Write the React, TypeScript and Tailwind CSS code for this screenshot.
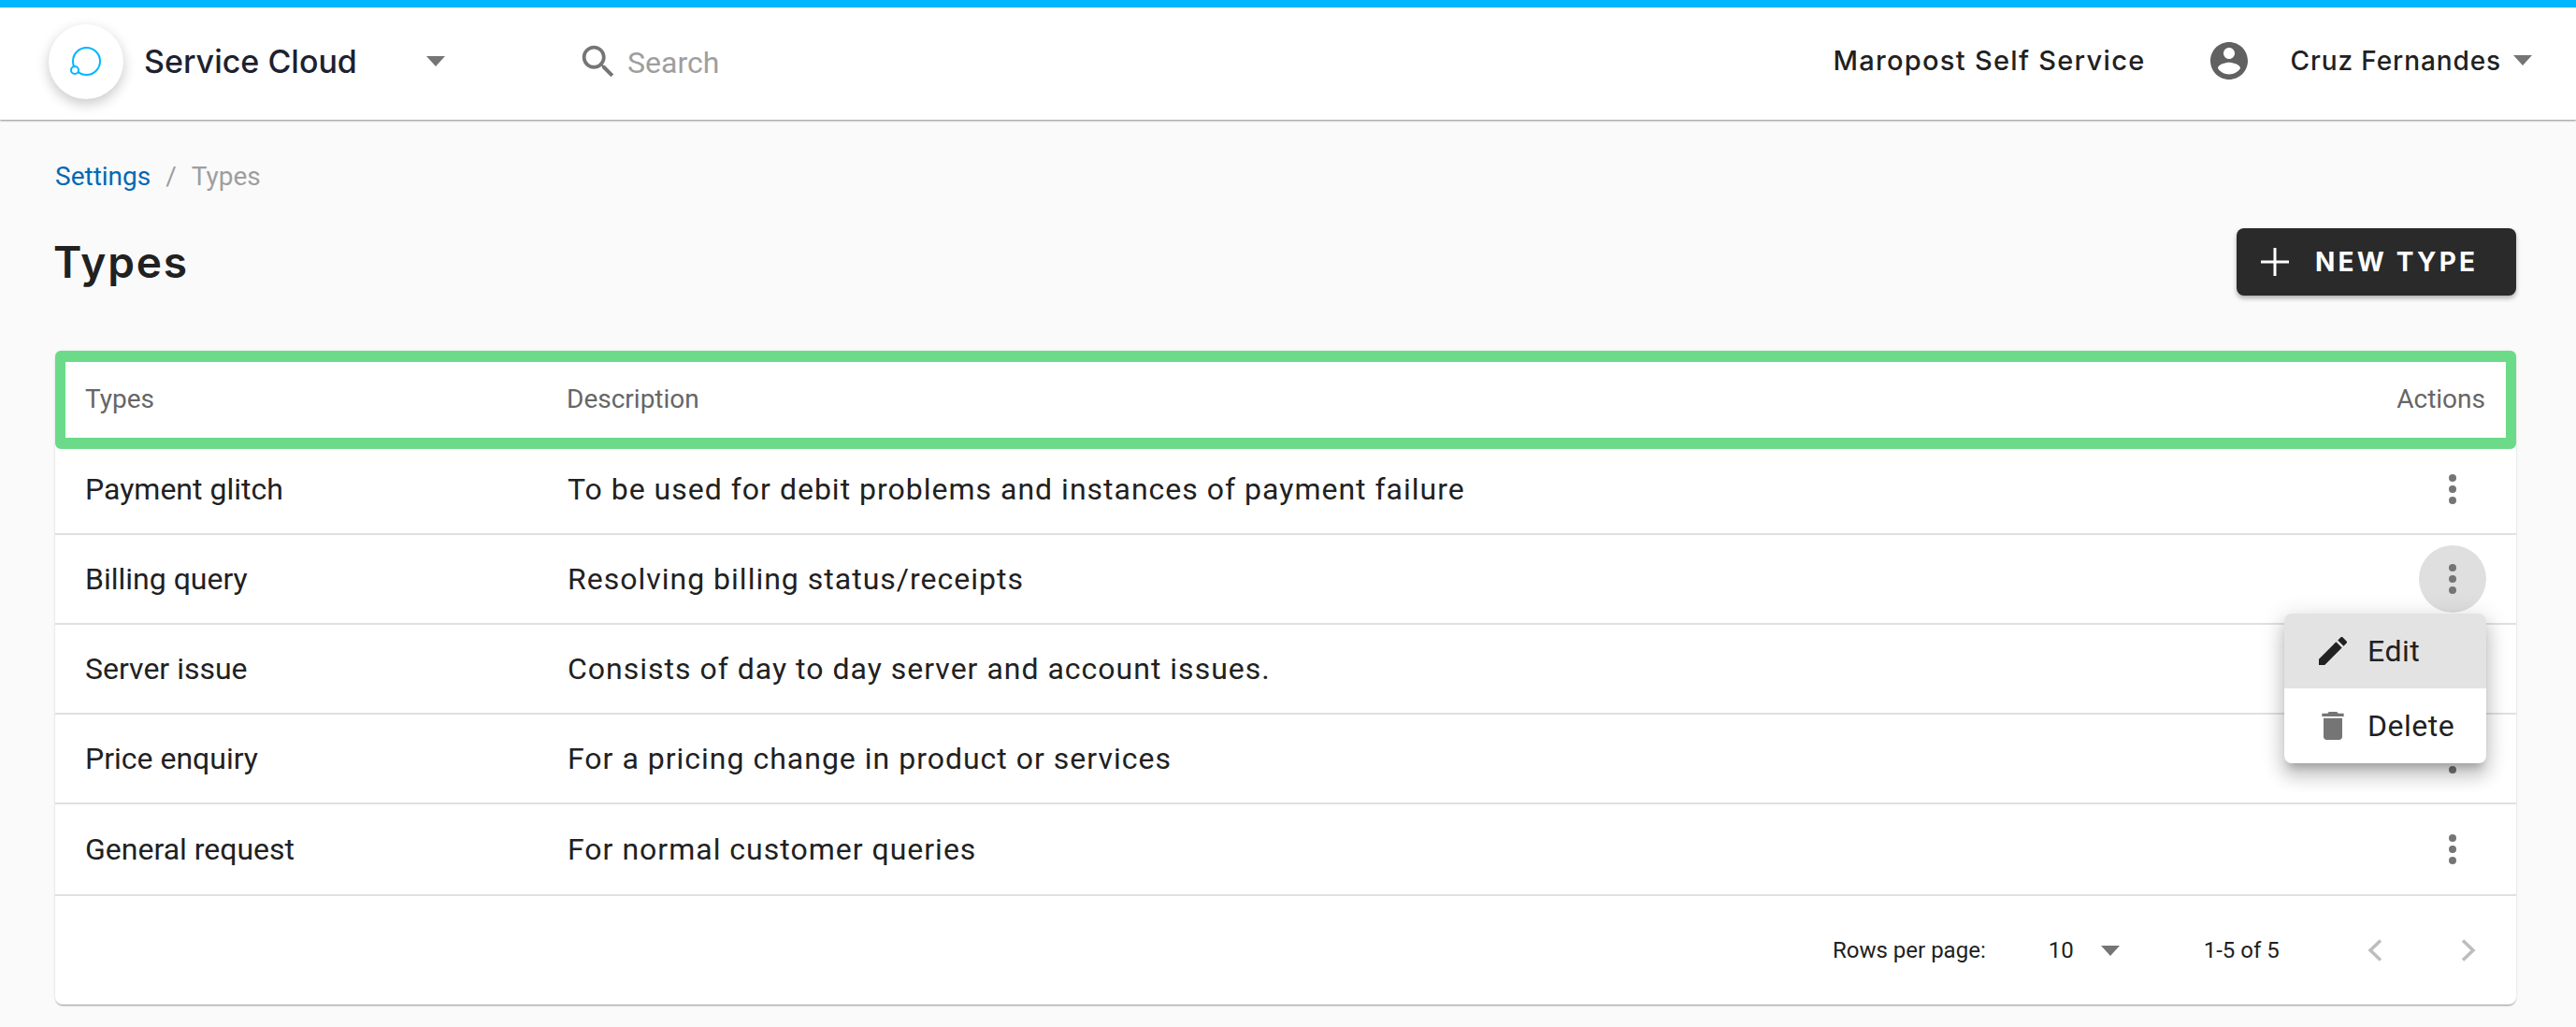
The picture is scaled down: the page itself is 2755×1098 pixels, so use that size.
import React from "react";

const brand = { fontFamily: "Inter, 'Liberation Sans', sans-serif" };

const rows = [
  { name: "Payment glitch", desc: "To be used for debit problems and instances of payment failure", h: "h-[92px] pb-1" },
  { name: "Billing query", desc: "Resolving billing status/receipts", h: "h-[96px]", active: true },
  { name: "Server issue", desc: "Consists of day to day server and account issues.", h: "h-[96px]" },
  { name: "Price enquiry", desc: "For a pricing change in product or services", h: "h-[96px]" },
  { name: "General request", desc: "For normal customer queries", h: "h-[98px]" },
];

function Icon({ d, className }: { d: string; className?: string }) {
  return (
    <svg viewBox="0 0 24 24" fill="currentColor" className={className}>
      <path d={d} />
    </svg>
  );
}

function Caret({ className }: { className?: string }) {
  return <div className={`w-0 h-0 border-x-[10px] border-x-transparent border-t-[11px] border-t-[#757575] ${className ?? ""}`} />;
}

function Kebab({ active }: { active?: boolean }) {
  return (
    <button className={`w-[72px] h-[72px] rounded-full flex flex-col items-center justify-center gap-1 ${active ? "bg-[#dfdfdf]" : ""}`}>
      <span className="w-2 h-2 rounded-full bg-[#757575]" />
      <span className="w-2 h-2 rounded-full bg-[#757575]" />
      <span className="w-2 h-2 rounded-full bg-[#757575]" />
    </button>
  );
}

function ActionMenu() {
  return (
    <div className="absolute left-[2384px] top-[281px] w-[216px] h-[160px] bg-white rounded-lg overflow-hidden shadow-[0_9px_9px_-5px_rgba(0,0,0,0.2),0_14px_18px_2px_rgba(0,0,0,0.14),0_5px_25px_4px_rgba(0,0,0,0.12)] text-[32px] text-[#212121] tracking-[0.5px]">
      <div className="h-20 bg-[#e3e3e3] flex items-center pl-8 gap-[17px]">
        <Icon className="w-10 h-10 text-[#212121]" d="M3 17.25V21h3.75L17.81 9.94l-3.75-3.75L3 17.25zM20.71 7.04c.39-.39.39-1.02 0-1.41l-2.34-2.34c-.39-.39-1.02-.39-1.41 0l-1.83 1.83 3.75 3.75 1.83-1.83z" />
        <span>Edit</span>
      </div>
      <div className="h-20 flex items-center pl-8 gap-[17px]">
        <Icon className="w-10 h-10 text-[#757575]" d="M6 19c0 1.1.9 2 2 2h8c1.1 0 2-.9 2-2V7H6v12zM19 4h-3.5l-1-1h-5l-1 1H5v2h14V4z" />
        <span>Delete</span>
      </div>
    </div>
  );
}

export default function App() {
  return (
    <div className="min-h-[1098px] bg-[#fafafa] font-['Roboto',sans-serif] overflow-hidden">
      <div className="h-2 bg-[#00b6ff]" />
      <header className="h-[120px] bg-white shadow-[0_1px_2px_rgba(0,0,0,0.45)] flex items-center pl-[52px] pr-[47px] relative">
        <div className="w-20 h-20 rounded-full bg-white shadow-[0_5px_14px_rgba(0,0,0,0.22)] flex items-center justify-center -mt-[4px]">
          <svg viewBox="0 0 40 40" className="w-10 h-10" fill="#ffffff" stroke="#00b6ff" strokeWidth="2">
            <circle cx="20.500" cy="19.500" r="14.500" />
            <circle cx="8" cy="29" r="4" />
          </svg>
        </div>
        <span style={brand} className="ml-[22px] w-[302px] text-[34px] font-medium text-[#1d2130] -mt-[5px]">Service Cloud</span>
        <Caret className="-mt-[5px]" />
        <Icon className="w-[46px] h-[46px] text-[#757575] ml-[141px] -mt-[4px]" d="M15.5 14h-.79l-.28-.27C15.410 12.590 16 11.110 16 9.500 16 5.910 13.090 3 9.500 3S3 5.910 3 9.500 5.910 16 9.500 16c1.610 0 3.090-.59 4.230-1.570l.27.28v.79l5 4.990L20.490 19l-4.990-5zm-6 0C7.010 14 5 11.990 5 9.500S7.010 5 9.500 5 14 7.010 14 9.500 11.990 14 9.500 14z" />
        <span className="ml-[8px] text-[32px] text-[#9e9e9e] -mt-[3px]">Search</span>
        <div className="ml-auto flex items-center -mt-[7px]">
          <span style={brand} className="text-[29px] font-medium tracking-[1.3px] text-[#212121]">Maropost Self Service</span>
          <Icon className="w-12 h-12 text-[#616161] ml-[65px]" d="M12 2C6.480 2 2 6.480 2 12s4.480 10 10 10 10-4.480 10-10S17.520 2 12 2zm0 3c1.660 0 3 1.340 3 3s-1.340 3-3 3-3-1.340-3-3 1.340-3 3-3zm0 14.200c-2.500 0-4.710-1.280-6-3.220.03-1.990 4-3.080 6-3.080 1.990 0 5.970 1.090 6 3.080-1.290 1.940-3.500 3.220-6 3.220z" />
          <span style={brand} className="ml-[42px] text-[28px] font-medium tracking-[0.9px] text-[#212121]">Cruz Fernandes</span>
          <Caret className="ml-[13px]" />
        </div>
      </header>

      <main className="px-[59px] pr-[64px]">
        <div className="mt-[41px] h-10 flex items-center text-[28px]">
          <span className="text-[#0069b4]">Settings</span>
          <span className="text-[#9e9e9e] mx-[16px]">/</span>
          <span className="text-[#9e9e9e]">Types</span>
        </div>

        <div className="mt-[35px] h-[72px] flex items-center justify-between">
          <h1 style={brand} className="text-[46px] font-semibold text-[#212121] tracking-[1.8px] -ml-[2px]">Types</h1>
          <button className="w-[299px] h-[72px] bg-[#2a2a2a] rounded-lg shadow-[0_3px_5px_rgba(0,0,0,0.3)] flex items-center pl-[26px] text-white">
            <svg viewBox="0 0 30 30" className="w-[30px] h-[30px]" stroke="currentColor" strokeWidth="3"><path d="M15 0v30M0 15h30" /></svg>
            <span style={brand} className="ml-[28px] text-[28px] font-bold tracking-[3.2px]">NEW TYPE</span>
          </button>
        </div>

        <div className="mt-[59px] relative h-[699px] bg-white rounded-lg shadow-[0_2px_2px_-1px_rgba(0,0,0,0.4),0_0_3px_rgba(0,0,0,0.1)]">
          <div className="h-[105px] border-x-[11px] border-y-[12px] border-[#6bdb89] rounded-md flex items-center justify-between pl-[21px] pr-[22px] pb-[1px] text-[28px] text-[#666666]">
            <div className="flex">
              <span className="w-[515px]">Types</span>
              <span>Description</span>
            </div>
            <span>Actions</span>
          </div>

          {rows.map((row) => (
            <div key={row.name} className={`${row.h} border-b-2 border-[#e0e0e0] flex items-center pl-8 pr-8 text-[32px] text-[#212121]`}>
              <span className="w-[516px]">{row.name}</span>
              <span className="tracking-[1px]">{row.desc}</span>
              <div className="ml-auto">
                <Kebab active={row.active} />
              </div>
            </div>
          ))}

          <div className="h-[116px] flex items-center text-[24px] text-[#212121]">
            <span className="ml-[1901px]">Rows per page:</span>
            <span className="ml-[67px]">10</span>
            <Caret className="ml-[29px]" />
            <span className="ml-[90px]">1-5 of 5</span>
            <svg viewBox="0 0 16 24" className="w-4 h-6 ml-[94px]" fill="none" stroke="#bdbdbd" strokeWidth="3.500"><path d="M14 1.500 3 12l11 10.500" /></svg>
            <svg viewBox="0 0 16 24" className="w-4 h-6 ml-[84px]" fill="none" stroke="#bdbdbd" strokeWidth="3.500"><path d="M2 1.500 13 12 2 22.500" /></svg>
          </div>

          <ActionMenu />
        </div>
      </main>
    </div>
  );
}
